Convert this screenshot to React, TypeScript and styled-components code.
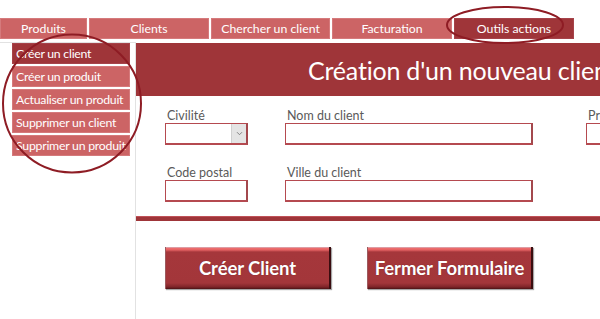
import React from "react";
import styled, { createGlobalStyle } from "styled-components";

const Global = createGlobalStyle`
  html, body { margin: 0; padding: 0; background: #fff; }
  body { font-family: Lato, "Open Sans", "Liberation Sans", sans-serif; }
  #root { width: 600px; height: 319px; overflow: hidden; position: relative; }
`;

const DARK = "#9f3539";
const LIGHT = "#cc6465";

const Page = styled.div`
  width: 600px;
  height: 319px;
  position: relative;
  overflow: hidden;
`;

const TabBar = styled.div`
  display: flex;
  gap: 2px;
  padding-top: 18px;
  height: 21px;
`;

const Tab = styled.div<{ $w: number; $active?: boolean }>`
  width: ${(p) => p.$w}px;
  height: 21px;
  box-sizing: border-box;
  background: ${(p) => (p.$active ? DARK : LIGHT)};
  border: 1px solid ${(p) => (p.$active ? "#a6434a" : "#d57a7c")};
  color: #fff;
  font-size: 12.3px;
  display: flex;
  align-items: center;
  justify-content: center;
`;

const Body = styled.div`
  display: flex;
  margin-top: 3px;
  height: 277px;
`;

const Sidebar = styled.div`
  width: 136px;
  flex: none;
  box-sizing: border-box;
  border-top: 1px solid #e2e2e2;
  border-right: 1px solid #e2e2e2;
  padding: 0 0 0 12px;
  display: flex;
  flex-direction: column;
  gap: 2px;
`;

const MenuItem = styled.div<{ $active?: boolean }>`
  width: 118px;
  height: 21px;
  box-sizing: border-box;
  background: ${(p) => (p.$active ? DARK : LIGHT)};
  border: 1px solid ${(p) => (p.$active ? "#a6434a" : "#d57a7c")};
  color: #fff;
  font-size: 12.3px;
  letter-spacing: -0.25px;
  padding-left: 3px;
  display: flex;
  align-items: center;
  white-space: nowrap;
  overflow: hidden;
`;

const Main = styled.div`
  flex: 1;
  padding-top: 1px;
  display: flex;
  flex-direction: column;
  min-width: 0;
`;

const Header = styled.div`
  height: 53px;
  background: ${DARK};
  color: #fff;
  font-size: 25px;
  display: flex;
  align-items: center;
  padding-left: 172px;
  white-space: nowrap;
  overflow: hidden;
  letter-spacing: -0.2px;
`;

const Form = styled.div`
  padding: 13px 0 0 29px;
  display: flex;
  flex-direction: column;
  gap: 21px;
`;

const Row = styled.div`
  display: flex;
  white-space: nowrap;
`;

const Field = styled.div<{ $w: number; $mr: number }>`
  width: ${(p) => p.$w}px;
  margin-right: ${(p) => p.$mr}px;
  flex: none;
  display: flex;
  flex-direction: column;
`;

const Label = styled.div`
  color: #5a5a5a;
  font-size: 12.5px;
  height: 14px;
  line-height: 14px;
  padding-left: 2px;
`;

const Input = styled.div`
  height: 22px;
  box-sizing: border-box;
  border: 1px solid #b54a50;
  border-right-width: 2px;
  border-bottom-width: 2px;
  border-right-color: #a3484d;
  background: #fff;
  display: flex;
  justify-content: flex-end;
`;

const DropBtn = styled.div`
  width: 14px;
  height: 19px;
  background: #e4e4e4;
  border-left: 1px solid #d0d0d0;
  display: flex;
  align-items: center;
  justify-content: center;
`;

const Separator = styled.div`
  margin-top: 14px;
  height: 4px;
  background: ${DARK};
  border-top: 1px solid #c05258;
`;

const Buttons = styled.div`
  display: flex;
  padding: 26px 0 0 29px;
  gap: 36px;
`;

const Btn = styled.div`
  width: 166px;
  height: 42px;
  box-sizing: border-box;
  background: linear-gradient(
    to bottom,
    #c9c9d8 0px,
    #f07070 1px,
    #e26061 3px,
    #a5373b 5px,
    #a3363a 36px,
    #7e2428 40px,
    #4a1215 42px
  );
  border-left: 1px solid #9c5a5e;
  border-right: 2px solid #3a0d10;
  box-shadow: 1px 1px 1px rgba(0, 0, 0, 0.35);
  color: #fff;
  font-weight: 700;
  font-size: 18.5px;
  display: flex;
  align-items: center;
  justify-content: center;
  letter-spacing: -0.1px;
  text-shadow: 0 0 1px rgba(60, 0, 0, 0.5);
`;

const Overlay = styled.svg`
  position: absolute;
  left: 0;
  top: 0;
  pointer-events: none;
`;

export default function App() {
  return (
    <Page>
      <Global />
      <TabBar>
        <Tab $w={87}>Produits</Tab>
        <Tab $w={120}>Clients</Tab>
        <Tab $w={119}>Chercher un client</Tab>
        <Tab $w={120}>Facturation</Tab>
        <Tab $w={120} $active>
          Outils actions
        </Tab>
      </TabBar>
      <Body>
        <Sidebar>
          <MenuItem $active>Créer un client</MenuItem>
          <MenuItem>Créer un produit</MenuItem>
          <MenuItem>Actualiser un produit</MenuItem>
          <MenuItem>Supprimer un client</MenuItem>
          <MenuItem>Supprimer un produit</MenuItem>
        </Sidebar>
        <Main>
          <Header>Création d'un nouveau client</Header>
          <Form>
            <Row>
              <Field $w={83} $mr={37}>
                <Label>Civilité</Label>
                <Input>
                  <DropBtn>
                    <svg width="7" height="5" viewBox="0 0 7 5">
                      <path d="M1 1.2 L3.5 3.7 L6 1.2" fill="none" stroke="#777" strokeWidth="0.9" />
                    </svg>
                  </DropBtn>
                </Input>
              </Field>
              <Field $w={248} $mr={53}>
                <Label>Nom du client</Label>
                <Input />
              </Field>
              <Field $w={100} $mr={0}>
                <Label>Prénom du client</Label>
                <Input />
              </Field>
            </Row>
            <Row>
              <Field $w={83} $mr={37}>
                <Label>Code postal</Label>
                <Input />
              </Field>
              <Field $w={248} $mr={0}>
                <Label>Ville du client</Label>
                <Input />
              </Field>
            </Row>
          </Form>
          <Separator />
          <Buttons>
            <Btn>Créer Client</Btn>
            <Btn>Fermer Formulaire</Btn>
          </Buttons>
        </Main>
      </Body>
      <Overlay width="600" height="319" viewBox="0 0 600 319">
        <ellipse cx="72" cy="103.5" rx="69" ry="69" fill="none" stroke="#8e1c24" strokeWidth="2" />
        <ellipse cx="505" cy="25" rx="58" ry="18" fill="none" stroke="#8e1c24" strokeWidth="2" />
      </Overlay>
    </Page>
  );
}
